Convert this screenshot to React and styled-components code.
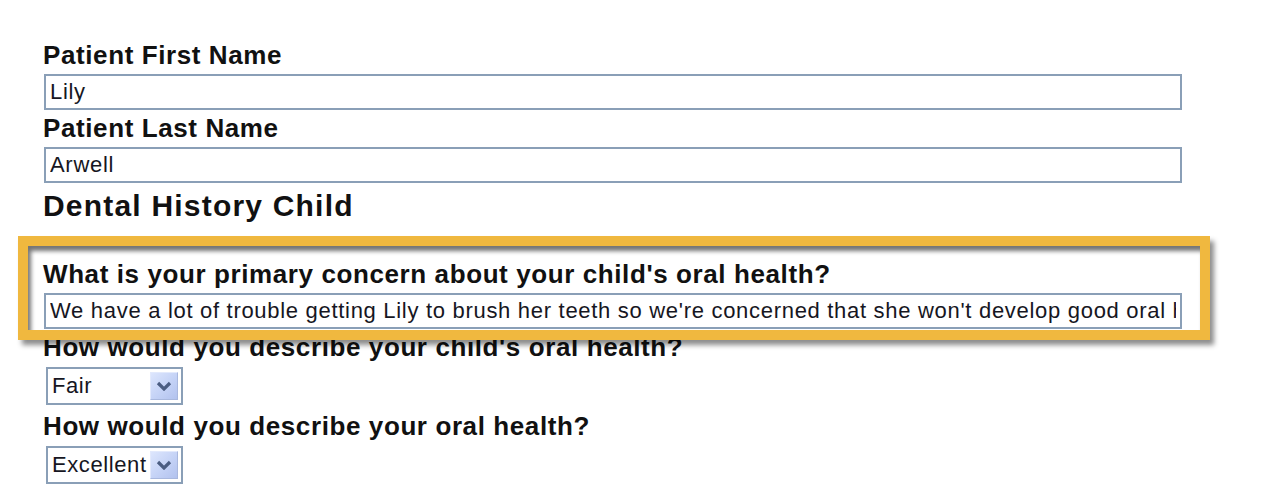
import styled, { createGlobalStyle } from "styled-components"

const GlobalStyle = createGlobalStyle`
body {
margin: 0;
background: #ffffff;
font-family: 'Liberation Sans', Arial, sans-serif;
}
`

const Page = styled.div`
position: relative;
width: 1262px;
height: 492px;
overflow: hidden;
padding: 40px 0 0 43px;
box-sizing: border-box;
`

const Label = styled.div`
font-size: 26px;
font-weight: 700;
letter-spacing: 0.6px;
line-height: 30px;
color: #111111;
`

const Heading = styled.h2`
margin: 5px 0 35px;
font-size: 30px;
font-weight: 700;
letter-spacing: 1.2px;
line-height: 36px;
color: #111111;
`

const TextInput = styled.input`
display: block;
box-sizing: border-box;
width: 1138px;
height: 36px;
margin: 4px 0 3px 1px;
padding: 0 4px;
border: 2px solid #8a9fb7;
outline: none;
background: #ffffff;
font-family: 'Liberation Sans', Arial, sans-serif;
font-size: 22px;
letter-spacing: 0.7px;
color: #161622;
`

const SelectBox = styled.div`
display: flex;
align-items: center;
box-sizing: border-box;
width: 137px;
height: 38px;
margin: 5px 0 6px 3px;
padding: 0 3px 0 4px;
border: 2px solid #8a9fb7;
background: #ffffff;
font-size: 22px;
letter-spacing: 0.6px;
color: #161622;
`

const SelectValue = styled.span`
flex: 1;
overflow: hidden;
white-space: nowrap;
`

const ArrowButton = styled.span`
display: flex;
align-items: center;
justify-content: center;
width: 28px;
height: 28px;
box-sizing: border-box;
border: 1px solid #e2e9fc;
border-bottom-color: #a9b8de;
border-right-color: #a9b8de;
background: linear-gradient(135deg, #dde6fd 0%, #c4d2f6 55%, #b2c2ee 100%);
`

const Highlight = styled.div`
position: absolute;
left: 18px;
top: 236px;
width: 1192px;
height: 104px;
box-sizing: border-box;
border: 10px solid #f0b83f;
box-shadow: 4px 5px 5px rgba(0, 0, 0, 0.45), inset 3px 5px 4px rgba(0, 0, 0, 0.55);
pointer-events: none;
`

const Chevron = () => (
    <svg width="16" height="10" viewBox="0 0 16 10">
        <path d="M2 2 L8 8 L14 2" fill="none" stroke="#4b5d82" strokeWidth="3.2" />
    </svg>
)

const Select = ({ value }) => (
    <SelectBox>
        <SelectValue>{value}</SelectValue>
        <ArrowButton><Chevron /></ArrowButton>
    </SelectBox>
)

const Field = ({ label, value }) => (
    <>
        <Label>{label}</Label>
        <TextInput readOnly value={value} />
    </>
)

const App = () => {
    return (
        <Page>
            <GlobalStyle />
            <Field label="Patient First Name" value="Lily" />
            <Field label="Patient Last Name" value="Arwell" />
            <Heading>Dental History Child</Heading>
            <Field
                label="What is your primary concern about your child's oral health?"
                value="We have a lot of trouble getting Lily to brush her teeth so we're concerned that she won't develop good oral hygiene habits."
            />
            <Label>How would you describe your child's oral health?</Label>
            <Select value="Fair" />
            <Label>How would you describe your oral health?</Label>
            <Select value="Excellent" />
            <Highlight />
        </Page>
    )
}

export default App
